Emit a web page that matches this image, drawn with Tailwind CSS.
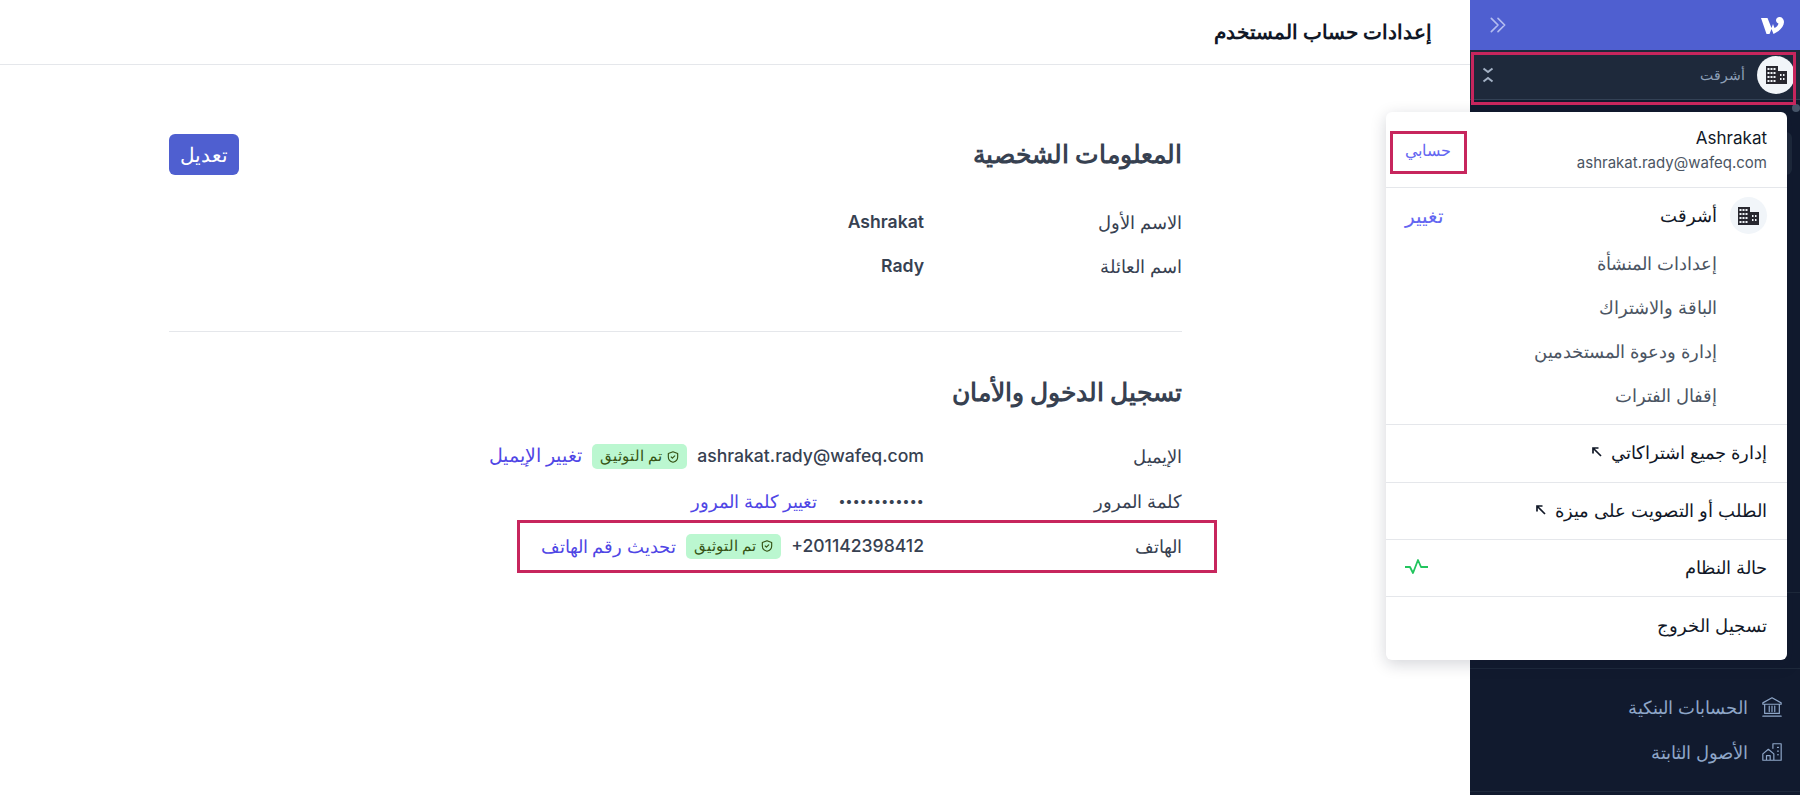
<!DOCTYPE html>
<html lang="ar" dir="rtl">
<head>
    <meta charset="UTF-8">
    <title>إعدادات حساب المستخدم</title>
    <script src="https://cdn.jsdelivr.net/npm/@tailwindcss/browser@4"></script>
</head>
<body class="h-[795px] w-[1800px] overflow-hidden bg-white font-['Inter','Noto_Sans',sans-serif] text-[#1f2937]">
<div class="relative flex h-full">

    <!-- sidebar -->
    <aside class="flex h-full w-[330px] shrink-0 flex-col bg-[#111a2e]">
        <div class="flex h-[50px] items-center justify-between bg-[#4f5fd0] pl-[18px] pr-[15px]">
            <svg class="h-[18px] w-[24px]" viewBox="0 0 24 18" fill="#fff"><path d="M0 2h6.500l4 10 1.500-4 1.500 4c2-1 3.500-2.500 4-4.500-1.500-.5-2.500-1.700-2.500-3.200C15 2.300 16.500 1 18.500 1 21 1 23 3 23 6c0 5-5 9.500-10.500 12l-2-5-2 5h-3z"/></svg>
            <svg class="h-[20px] w-[20px] text-[#b4bdf0]" viewBox="0 0 24 24" fill="none" stroke="currentColor" stroke-width="2"><path stroke-linecap="round" stroke-linejoin="round" d="m4 4 8 8-8 8m8-16 8 8-8 8"/></svg>
        </div>
        <div class="flex h-[50px] items-center justify-between border-b border-[#334155] bg-[#1e293b] pl-[10px] pr-[5px]">
            <div class="flex items-center gap-[12px]">
                <span class="flex h-[38px] w-[38px] items-center justify-center rounded-full bg-[#f1f5f9]">
                    <svg class="h-[18px] w-[21px]" viewBox="0 0 21 18" fill="#27272f"><path fill-rule="evenodd" d="M0 0h12v5h9v13H0zM1.500 2v2h2V2zm3 0v2h2V2zm3 0v2h2V2zm-6 4v2h2V6zm3 0v2h2V6zm3 0v2h2V6zm-6 4v2h2v-2zm3 0v2h2v-2zm3 0v2h2v-2zm-6 4v2h2v-2zm3 0v2h2v-2zm3 0v2h2v-2zM14 8v2h1.500V8zm3 0v2h1.500V8zm-3 4v2h1.500v-2zm3 0v2h1.500v-2z"/></svg>
                </span>
                <span class="text-[14px] text-[#8ea0b8]">أشرقت</span>
            </div>
            <svg class="h-[18px] w-[16px] text-[#a3b1c4]" viewBox="0 0 16 18" fill="none" stroke="currentColor" stroke-width="2"><path d="m3.500 2.500L8 6l4.500-3.500M3.500 15.500 8 12l4.500 3.500"/></svg>
        </div>
        <div class="h-[32px] pl-[6px] pt-[4px]"><span class="block h-[8px] w-[8px] rounded-full bg-[#475569]"></span></div>
        <div class="ml-[8px] mr-[8px] h-[43px] rounded-[6px] bg-[#1e293b]"></div>
        <div class="flex-1"></div>
        <div class="h-[76px] border-t border-[#1e293b]"></div>
        <div class="mb-[3px] flex h-[124px] flex-col gap-[5px] border-y border-[#1e293b] pr-[17px] pt-[18px]">
            <a class="flex h-[40px] items-center gap-[13px] text-[18px] text-[#8ea6c8]">
                <svg class="h-[22px] w-[22px]" viewBox="0 0 24 24" fill="none" stroke="currentColor" stroke-width="1.300"><path stroke-linecap="round" stroke-linejoin="round" d="M12 2 2 7.500V9h20V7.500zM4 9v10M4 19h16M20 9v10M9 11v6M12 11v6M15 11v6M2 22h20"/></svg>
                الحسابات البنكية
            </a>
            <a class="flex h-[40px] items-center gap-[13px] text-[18px] text-[#8ea6c8]">
                <svg class="h-[22px] w-[22px]" viewBox="0 0 24 24" fill="none" stroke="currentColor" stroke-width="1.300"><path stroke-linecap="round" stroke-linejoin="round" d="M22 3H13v5M22 3v18h-8M18 7h1M18 11h1M18 15h1M2 21v-7l6-5 6 5v7zM6 21v-5h4v5"/></svg>
                الأصول الثابتة
            </a>
        </div>
    </aside>

    <!-- main -->
    <main class="min-w-0 flex-1">
        <header class="flex h-[65px] items-center border-b border-[#e5e7eb] pr-[38px]">
            <h1 class="text-[20px] font-semibold text-[#111827]">إعدادات حساب المستخدم</h1>
        </header>
        <div class="pl-[169px] pr-[288px] pt-[69px]">
            <section class="border-b border-[#e5e7eb] pb-[43px]">
                <div class="flex h-[41px] items-center justify-between">
                    <h2 class="text-[24.5px] font-semibold text-[#374151]">المعلومات الشخصية</h2>
                    <button class="h-[41px] w-[70px] rounded-[6px] bg-[#4f5fd0] text-[20px] text-white">تعديل</button>
                </div>
                <dl class="mt-[25px] flex flex-col">
                    <div class="flex h-[44px] items-center">
                        <dt class="w-[258px] text-[18px] text-[#374151]">الاسم الأول</dt>
                        <dd class="text-[17.6px] font-semibold text-[#374151]">Ashrakat</dd>
                    </div>
                    <div class="flex h-[44px] items-center">
                        <dt class="w-[258px] text-[18px] text-[#374151]">اسم العائلة</dt>
                        <dd class="text-[17.6px] font-semibold text-[#374151]">Rady</dd>
                    </div>
                </dl>
            </section>
            <section class="pt-[40px]">
                <h2 class="flex h-[41px] items-center text-[24.5px] font-semibold text-[#374151]">تسجيل الدخول والأمان</h2>
                <dl class="mt-[21px] flex flex-col">
                    <div class="flex h-[45px] items-center">
                        <dt class="w-[258px] text-[18px] text-[#374151]">الإيميل</dt>
                        <dd class="flex items-center gap-[10px]">
                            <span class="text-[17.6px] font-medium text-[#374151]">ashrakat.rady@wafeq.com</span>
                            <span class="flex h-[25px] w-[95px] items-center justify-center gap-[4px] rounded-[5px] bg-[#bbf7d0] text-[15px] font-medium text-[#365314]">
                                <svg class="h-[14px] w-[14px]" viewBox="0 0 24 24" fill="none" stroke="currentColor" stroke-width="2"><path stroke-linecap="round" stroke-linejoin="round" d="M12 3 4 6v6c0 5 4 8 8 9 4-1 8-4 8-9V6zM9 12l2 2 4-4"/></svg>
                                تم التوثيق
                            </span>
                            <a class="text-[19px] font-medium text-[#4f46e5]">تغيير الإيميل</a>
                        </dd>
                    </div>
                    <div class="flex h-[45px] items-center">
                        <dt class="w-[258px] text-[18px] text-[#374151]">كلمة المرور</dt>
                        <dd class="flex items-center gap-[21px]">
                            <span class="text-[13px] font-medium tracking-[0.2px] text-[#374151]">••••••••••••</span>
                            <a class="text-[18px] font-medium text-[#4f46e5]">تغيير كلمة المرور</a>
                        </dd>
                    </div>
                    <div class="flex h-[44px] items-center">
                        <dt class="w-[258px] text-[18px] text-[#374151]">الهاتف</dt>
                        <dd class="flex items-center gap-[10px]">
                            <span dir="ltr" class="text-[17.6px] font-medium text-[#374151]">+201142398412</span>
                            <span class="flex h-[25px] w-[95px] items-center justify-center gap-[4px] rounded-[5px] bg-[#bbf7d0] text-[15px] font-medium text-[#365314]">
                                <svg class="h-[14px] w-[14px]" viewBox="0 0 24 24" fill="none" stroke="currentColor" stroke-width="2"><path stroke-linecap="round" stroke-linejoin="round" d="M12 3 4 6v6c0 5 4 8 8 9 4-1 8-4 8-9V6zM9 12l2 2 4-4"/></svg>
                                تم التوثيق
                            </span>
                            <a class="text-[18px] font-medium text-[#4f46e5]">تحديث رقم الهاتف</a>
                        </dd>
                    </div>
                </dl>
            </section>
        </div>
    </main>

    <!-- account menu -->
    <div class="absolute left-[1386px] top-[112px] w-[401px] rounded-[6px] bg-white shadow-[0_4px_16px_rgba(15,23,42,0.18)]">
        <div class="flex h-[76px] items-center justify-between border-b border-[#e5e7eb] pl-[19px] pr-[20px]">
            <div class="pt-[2px]">
                <p class="text-[17px] leading-[24px] text-[#111827]">Ashrakat</p>
                <p class="text-[15px] leading-[25px] text-[#4b5563]">ashrakat.rady@wafeq.com</p>
            </div>
            <a class="text-[16px] text-[#6366f1]">حسابي</a>
        </div>
        <div class="border-b border-[#e5e7eb] pb-[7px] pl-[19px] pr-[20px] pt-[9px]">
            <div class="flex h-[37px] items-center justify-between">
                <div class="flex items-center gap-[13px]">
                    <span class="flex h-[37px] w-[37px] items-center justify-center rounded-full bg-[#f1f5f9]">
                        <svg class="h-[18px] w-[21px]" viewBox="0 0 21 18" fill="#27272f"><path fill-rule="evenodd" d="M0 0h12v5h9v13H0zM1.500 2v2h2V2zm3 0v2h2V2zm3 0v2h2V2zm-6 4v2h2V6zm3 0v2h2V6zm3 0v2h2V6zm-6 4v2h2v-2zm3 0v2h2v-2zm3 0v2h2v-2zm-6 4v2h2v-2zm3 0v2h2v-2zm3 0v2h2v-2zM14 8v2h1.500V8zm3 0v2h1.500V8zm-3 4v2h1.500v-2zm3 0v2h1.500v-2z"/></svg>
                    </span>
                    <span class="text-[18px] text-[#111827]">أشرقت</span>
                </div>
                <a class="text-[20px] text-[#6366f1]">تغيير</a>
            </div>
            <ul class="mt-[7px] flex flex-col pr-[50px] text-[18px] text-[#4b5563]">
                <li class="flex h-[44px] items-center">إعدادات المنشأة</li>
                <li class="flex h-[44px] items-center">الباقة والاشتراك</li>
                <li class="flex h-[44px] items-center">إدارة ودعوة المستخدمين</li>
                <li class="flex h-[44px] items-center">إقفال الفترات</li>
            </ul>
        </div>
        <a class="flex h-[58px] items-center gap-[8px] border-b border-[#e5e7eb] pb-[3px] pr-[20px] text-[18px] text-[#111827]">
            إدارة جميع اشتراكاتي
            <svg class="h-[12px] w-[12px]" viewBox="0 0 12 12" fill="none" stroke="currentColor" stroke-width="1.700"><path d="M10 10 2.500 2.500M2 7.500V2h5.500"/></svg>
        </a>
        <a class="flex h-[57px] items-center gap-[8px] border-b border-[#e5e7eb] pb-[2px] pr-[20px] text-[18px] text-[#111827]">
            الطلب أو التصويت على ميزة
            <svg class="h-[12px] w-[12px]" viewBox="0 0 12 12" fill="none" stroke="currentColor" stroke-width="1.700"><path d="M10 10 2.500 2.500M2 7.500V2h5.500"/></svg>
        </a>
        <a class="flex h-[57px] items-center justify-between border-b border-[#e5e7eb] pb-[2px] pl-[19px] pr-[20px] text-[18px] text-[#111827]">
            حالة النظام
            <svg class="h-[16px] w-[24px] text-[#22c55e]" viewBox="0 0 24 16" fill="none" stroke="currentColor" stroke-width="1.800"><path stroke-linejoin="round" d="M0 8h5l3 6 5-13 3 7h7"/></svg>
        </a>
        <a class="flex h-[63px] items-center pb-[6px] pr-[20px] text-[18px] text-[#111827]">تسجيل الخروج</a>
    </div>

    <!-- annotation boxes -->
    <div class="absolute left-[1471px] top-[52px] h-[53px] w-[325px] border-[3px] border-[#c7265d]"></div>
    <div class="absolute left-[1390px] top-[131px] h-[43px] w-[77px] border-[3px] border-[#c7265d]"></div>
    <div class="absolute left-[517px] top-[520px] h-[53px] w-[700px] border-[3px] border-[#c7265d]"></div>
</div>
</body>
</html>
